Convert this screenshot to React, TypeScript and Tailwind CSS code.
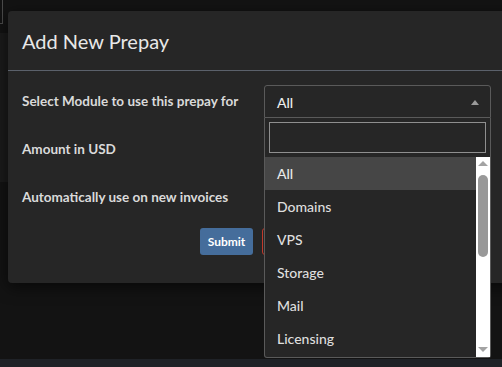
import React from 'react';

const modules = ['All', 'Domains', 'VPS', 'Storage', 'Mail', 'Licensing'];

function ModuleDropdown() {
    return (
        <div className="absolute left-0 top-full w-[227px] bg-[#262626] border-x border-b border-[#5a5a5a] rounded-b-[3px] z-10">
            {/* Search */}
            <div className="px-[4px] pt-[4px] pb-[4px]">
                <input
                    type="text"
                    className="block w-full h-[31px] bg-[#262626] border border-[#8f8f8f] outline-none px-2 text-[14px] text-[#eee]"
                />
            </div>

            {/* Options + scrollbar */}
            <div className="flex h-[200px]">
                <ul className="flex-1 overflow-hidden">
                    {modules.map((m, i) => (
                        <li
                            key={m}
                            className={`h-[33px] flex items-center pl-[12px] text-[14px] font-medium ${i === 0 ? 'bg-[#464646] text-[#eaeaea]' : 'text-[#dedede]'}`}
                        >
                            {m}
                        </li>
                    ))}
                </ul>
                <div className="w-[14px] bg-white flex flex-col items-center pt-[4px] pb-[5px]">
                    <div className="w-0 h-0 border-x-[5px] border-x-transparent border-b-[5px] border-b-[#a3a3a3]" />
                    <div className="mt-[9px] w-[10px] h-[82px] rounded-full bg-[#999]" />
                    <div className="flex-1" />
                    <div className="w-0 h-0 border-x-[5px] border-x-transparent border-t-[5px] border-t-[#a3a3a3]" />
                </div>
            </div>
        </div>
    );
}

function AddPrepayModal() {
    return (
        <div className="absolute left-[8px] top-[11px] w-[520px] h-[272px] rounded-[4px] bg-[#262626] shadow-[0_4px_16px_rgba(0,0,0,0.6)]">
            {/* Header */}
            <div className="h-[60px] flex items-center px-[14px] border-b border-[#5b616b]">
                <h2 className="text-[20px] text-[#e8e8e8] leading-none">Add New Prepay</h2>
            </div>

            {/* Form */}
            <div className="px-[14px] pt-[6px]">
                <div className="h-[48px] flex items-center">
                    <label className="w-[242px] text-[13.5px] font-bold text-[#dadada]">
                        Select Module to use this prepay for
                    </label>
                    <div className="relative w-[227px] mt-[1px]">
                        <div className="h-[33px] flex items-center justify-between pl-[12px] pr-[11px] pt-[2px] border border-[#5a5a5a] rounded-t-[3px] bg-[#262626]">
                            <span className="text-[14px] font-medium text-[#eeeeee]">All</span>
                            <span className="w-0 h-0 border-x-[4px] border-x-transparent border-b-[5px] border-b-[#9a9a9a]" />
                        </div>
                        <ModuleDropdown />
                    </div>
                </div>
                <div className="h-[48px] flex items-center">
                    <label className="text-[13.5px] font-bold text-[#dadada]">Amount in USD</label>
                </div>
                <div className="h-[48px] flex items-center">
                    <label className="text-[13.5px] font-bold text-[#dadada]">Automatically use on new invoices</label>
                </div>

                {/* Actions */}
                <div className="mt-[7px] ml-[178px] flex gap-[9px]">
                    <button className="h-[27px] w-[53px] rounded-[3px] bg-[#456d9b] text-white text-[12px] font-bold">
                        Submit
                    </button>
                    <button className="h-[27px] w-[60px] rounded-[3px] border border-[#c0392b] bg-[#262626]" />
                </div>
            </div>
        </div>
    );
}

export default function App() {
    return (
        <div className="relative w-[502px] h-[367px] overflow-hidden bg-[#131313] font-['Lato',sans-serif]">
            {/* Background page bits behind the overlay */}
            <div className="absolute left-0 top-0 w-[3px] h-[24px] border-r border-b border-[#4a4a4a]" />
            <div className="absolute left-0 top-[33px] w-[8px] h-[149px] bg-[#1b1b1b]" />
            <div className="absolute left-0 bottom-0 w-full h-[8px] bg-[#1f2227]" />

            <AddPrepayModal />
        </div>
    );
}
